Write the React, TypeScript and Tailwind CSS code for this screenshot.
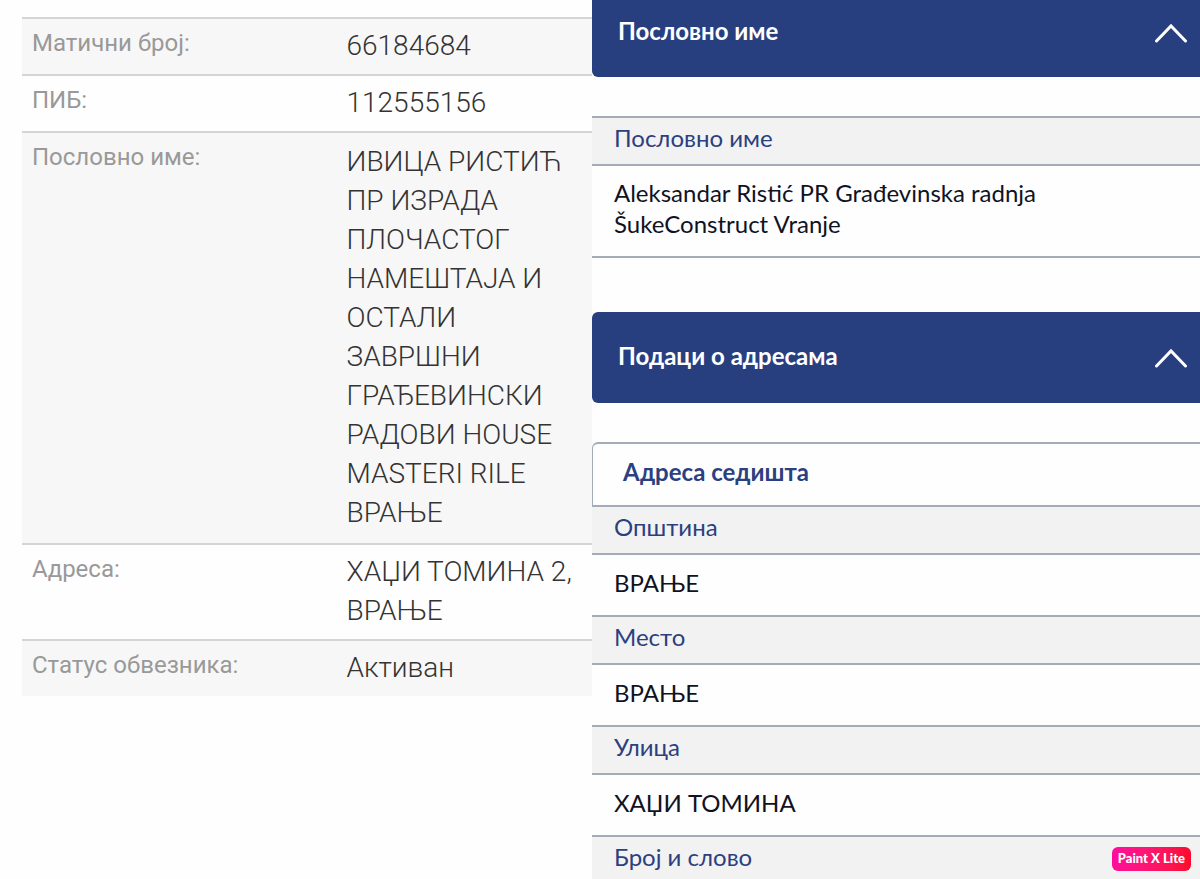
import React from 'react';

interface TaxRow {
  label: string;
  lines: string[];
  spacing: string;
}

const taxRows: TaxRow[] = [
  { label: 'Матични број:', lines: ['66184684'], spacing: 'pt-[7px] pb-[9px]' },
  { label: 'ПИБ:', lines: ['112555156'], spacing: 'pt-[7px] pb-[9px]' },
  {
    label: 'Пословно име:',
    lines: [
      'ИВИЦА РИСТИЋ',
      'ПР ИЗРАДА',
      'ПЛОЧАСТОГ',
      'НАМЕШТАЈА И',
      'ОСТАЛИ',
      'ЗАВРШНИ',
      'ГРАЂЕВИНСКИ',
      'РАДОВИ HOUSE',
      'MASTERI RILE',
      'ВРАЊЕ',
    ],
    spacing: 'pt-[9px] pb-[11px]',
  },
  { label: 'Адреса:', lines: ['ХАЏИ ТОМИНА 2,', 'ВРАЊЕ'], spacing: 'pt-[7px] pb-[9px]' },
  { label: 'Статус обвезника:', lines: ['Активан'], spacing: 'pt-[7px] pb-[9px]' },
];

const addressFields = [
  { label: 'Општина', value: 'ВРАЊЕ' },
  { label: 'Место', value: 'ВРАЊЕ' },
  { label: 'Улица', value: 'ХАЏИ ТОМИНА' },
];

function Chevron() {
  return (
    <svg className="h-5 w-9 shrink-0" viewBox="0 0 36 20" fill="none" stroke="currentColor" strokeWidth="3" aria-hidden="true">
      <path d="M3.5 18 L18 3 L32.5 18" strokeLinecap="round" />
    </svg>
  );
}

// Collapsible section bar
function SectionHeader({ title, className }: { title: string; className: string }) {
  return (
    <button
      type="button"
      aria-expanded="true"
      className={`flex w-full items-center justify-between bg-[#283f7f] pl-[26px] pr-[11px] text-left text-2xl font-bold text-white ${className}`}
    >
      <span className="pb-1">{title}</span>
      <Chevron />
    </button>
  );
}

function FieldLabel({ children }: { children: React.ReactNode }) {
  return (
    <dt className="border-t-2 border-[#a3adb7] bg-[#f2f2f3] px-[22px] pt-0.5 pb-2 text-2xl leading-9 text-[#2b407f] last:pb-1">
      {children}
    </dt>
  );
}

function FieldValue({ children }: { children: React.ReactNode }) {
  return (
    <dd className="border-t-2 border-[#a3adb7] px-[22px] pt-2.5 pb-3.5 text-2xl leading-9 text-[#10131f]">
      {children}
    </dd>
  );
}

function TaxTable() {
  return (
    <table className="w-full border-separate border-spacing-0 font-['Roboto',sans-serif]">
      <tbody>
        {taxRows.map((row) => (
          <tr key={row.label} className="odd:bg-[#f7f7f7]">
            <th
              scope="row"
              className="w-[55%] border-t-2 border-[#d5d5d5] px-2.5 py-1.5 text-left align-top text-2xl leading-9 font-normal text-[#999999]"
            >
              {row.label}
            </th>
            <td className={`border-t-2 border-[#d5d5d5] pl-[11px] align-top text-[28px] leading-[39px] font-light text-[#333333] ${row.spacing}`}>
              {row.lines.map((line) => (
                <span key={line} className="block whitespace-nowrap">
                  {line}
                </span>
              ))}
            </td>
          </tr>
        ))}
      </tbody>
    </table>
  );
}

export default function App() {
  return (
    <div className="relative grid grid-cols-[592fr_608fr] bg-[#fefefe]">
      <section className="min-w-0 pt-[17px] pl-[22px]">
        <TaxTable />
      </section>

      <section className="min-w-0 font-['Lato',sans-serif]">
        <SectionHeader title="Пословно име" className="h-[77px] rounded-bl-md pb-3" />
        <dl className="mt-[39px] border-b-2 border-[#a3adb7]">
          <FieldLabel>Пословно име</FieldLabel>
          <dd className="border-t-2 border-[#a3adb7] px-[22px] pt-[11px] pb-[17px] text-2xl leading-[31px] text-[#10131f]">
            <span className="block">Aleksandar Ristić PR Građevinska radnja</span>
            <span className="block">ŠukeConstruct Vranje</span>
          </dd>
        </dl>

        <SectionHeader title="Подаци о адресама" className="mt-[54px] h-[91px] rounded-l-md" />
        <h2 className="mt-[39px] h-[63px] rounded-tl-md border-t-2 border-l border-[#a3adb7] pt-2.5 pl-[30px] text-2xl leading-9 font-bold text-[#2b407f]">
          Адреса седишта
        </h2>
        <dl>
          {addressFields.map((field) => (
            <React.Fragment key={field.label}>
              <FieldLabel>{field.label}</FieldLabel>
              <FieldValue>{field.value}</FieldValue>
            </React.Fragment>
          ))}
          <FieldLabel>Број и слово</FieldLabel>
        </dl>
      </section>

      <span className="absolute right-[9px] bottom-2 flex h-6 items-center rounded-md bg-linear-to-r from-[#ff0a9c] to-[#fb0a28] px-1.5 font-['Lato',sans-serif] text-[13px] font-black text-white">
        Paint X Lite
      </span>
    </div>
  );
}
